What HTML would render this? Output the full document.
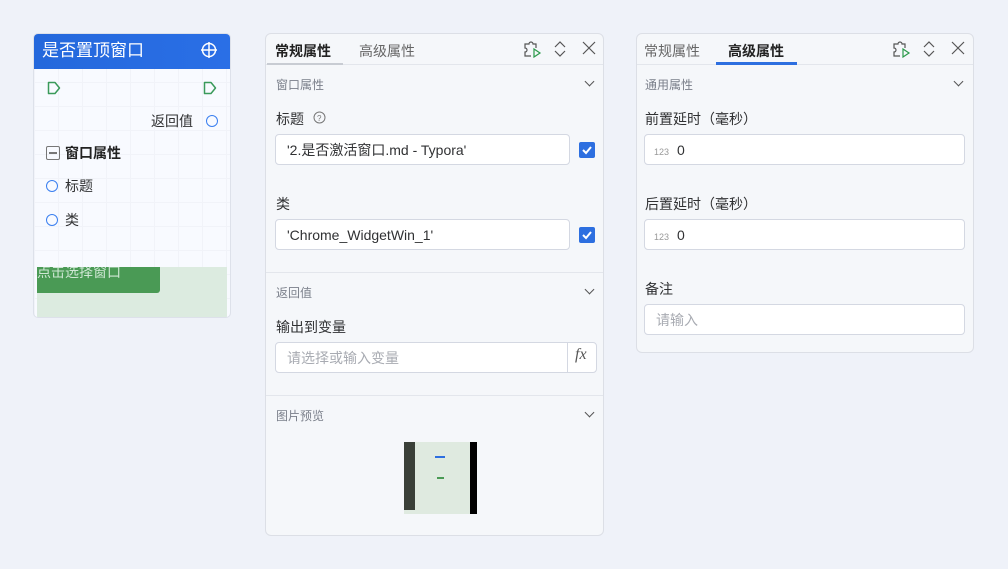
<!DOCTYPE html>
<html><head><meta charset="utf-8"><style>
*{box-sizing:border-box;margin:0;padding:0}
body{width:1008px;height:569px;background:#eff2f9;font-family:"Liberation Sans","Noto Sans CJK SC",sans-serif;position:relative;overflow:hidden;color:#303133}
.abs{position:absolute}
.node{left:33px;top:33px;width:198px;height:285px;border:1px solid #dde1ea;border-radius:5px;overflow:hidden;background:#f8faff;
background-image:linear-gradient(#f1f3f9 1px,transparent 1px),linear-gradient(90deg,#f1f3f9 1px,transparent 1px);background-size:24px 24px}
.nh{left:0;top:0;width:196px;height:35px;background:linear-gradient(90deg,#2468dc,#2a6fe6);color:#fff;font-size:17px;line-height:34px;padding-left:8px}
.panel{background:#f5f7fa;border:1px solid #dcdfe6;border-radius:6px}
.sec{font-size:12px;color:#7a7f8a}
.lbl{font-size:14px;color:#303133}
.inp{background:#fff;border:1px solid #d4d8e2;border-radius:4px;height:31px;font-size:14px;line-height:30px;padding-left:11px}
.chk{width:16px;height:16px;background:#2d6fe0;border-radius:2px}
.chev{width:7px;height:7px;border-right:1.8px solid #555;border-bottom:1.8px solid #555;transform:rotate(45deg)}
.hr{height:1px;background:#e3e6ec}
.circ{width:12px;height:12px;border:1.5px solid #3a7ff0;border-radius:50%}
</style></head><body>
<div class="abs node">
 <div class="abs nh">是否置顶窗口</div>
 <svg class="abs" style="left:166px;top:7px" width="18" height="18" viewBox="0 0 18 18" fill="none" stroke="#fff" stroke-width="1.5"><circle cx="9" cy="9" r="6.5"/><path d="M9 1v16M1 9h16"/></svg>
 <svg class="abs" style="left:12px;top:46px" width="16" height="16" viewBox="0 0 16 16" fill="none" stroke="#3a9a5a" stroke-width="1.5"><path d="M2.5 2.5h6.5l4.5 5.5-4.5 5.5H2.5z" stroke-linejoin="round"/></svg>
 <svg class="abs" style="left:168px;top:46px" width="16" height="16" viewBox="0 0 16 16" fill="none" stroke="#3a9a5a" stroke-width="1.5"><path d="M2.5 2.5h6.5l4.5 5.5-4.5 5.5H2.5z" stroke-linejoin="round"/></svg>
 <div class="abs lbl" style="left:117px;top:77px">返回值</div>
 <div class="abs circ" style="left:172px;top:81px"></div>
 <div class="abs" style="left:12px;top:112px;width:14px;height:14px;border:1.5px solid #777;border-radius:2px"><div style="margin:5px 2px 0;height:1.5px;background:#777"></div></div>
 <div class="abs lbl" style="left:31px;top:109px;font-weight:bold;color:#222">窗口属性</div>
 <div class="abs circ" style="left:12px;top:146px"></div>
 <div class="abs lbl" style="left:31px;top:142px">标题</div>
 <div class="abs circ" style="left:12px;top:180px"></div>
 <div class="abs lbl" style="left:31px;top:176px">类</div>
 <div class="abs" style="left:3px;top:233px;width:190px;height:52px;background:#dcebe0"></div>
 <div class="abs" style="left:3px;top:233px;width:123px;height:26px;background:#4a9a55;border-radius:0 0 3px 0;color:#cfe7d4;font-size:14px;line-height:10px;overflow:hidden">点击选择窗口</div>
</div>

<div class="abs panel" style="left:265px;top:33px;width:339px;height:503px">
 <div class="abs" style="left:9px;top:7px;font-size:14px;font-weight:bold;color:#222">常规属性</div>
 <div class="abs" style="left:93px;top:7px;font-size:14px;color:#666">高级属性</div>
 <div class="abs" style="left:0;top:30px;width:337px;height:1px;background:#e3e6ec"></div>
 <div class="abs" style="left:1px;top:29px;width:76px;height:2px;background:#c8ccd3"></div>
 <svg class="abs" style="left:256px;top:6px" width="20" height="18" viewBox="0 0 20 18" fill="none" stroke="#555" stroke-width="1.2"><path d="M9 16H3v-4a2 2 0 0 0 0-4V4h4a2 2 0 0 1 4 0h3v4"/><path d="M12 9l6 4-6 4z" stroke="#2a9a4a"/></svg>
 <svg class="abs" style="left:287px;top:6px" width="14" height="18" viewBox="0 0 14 18" fill="none" stroke="#555" stroke-width="1.2"><path d="M2 7l5-5 5 5M2 11l5 5 5-5"/></svg>
 <svg class="abs" style="left:316px;top:7px" width="14" height="14" viewBox="0 0 14 14" stroke="#555" stroke-width="1.2"><path d="M1 1l12 12M13 1L1 13"/></svg>
 <div class="abs sec" style="left:10px;top:42px">窗口属性</div><div class="abs chev" style="left:320px;top:44px"></div>
 <div class="abs lbl" style="left:10px;top:75px">标题</div>
 <svg class="abs" style="left:47px;top:77px" width="13" height="13" viewBox="0 0 13 13" fill="none" stroke="#777"><circle cx="6.5" cy="6.5" r="5.5"/><text x="4" y="10" font-size="8" fill="#777" stroke="none">?</text></svg>
 <div class="abs inp" style="left:9px;top:100px;width:295px">'2.是否激活窗口.md - Typora'</div>
 <div class="abs chk" style="left:313px;top:108px"><svg width="16" height="16"><path d="M4 8l3 3 5-6" stroke="#fff" stroke-width="2" fill="none"/></svg></div>
 <div class="abs lbl" style="left:10px;top:160px">类</div>
 <div class="abs inp" style="left:9px;top:185px;width:295px">'Chrome_WidgetWin_1'</div>
 <div class="abs chk" style="left:313px;top:193px"><svg width="16" height="16"><path d="M4 8l3 3 5-6" stroke="#fff" stroke-width="2" fill="none"/></svg></div>
 <div class="abs hr" style="left:0;top:238px;width:337px"></div>
 <div class="abs sec" style="left:10px;top:250px">返回值</div><div class="abs chev" style="left:320px;top:252px"></div>
 <div class="abs lbl" style="left:10px;top:283px">输出到变量</div>
 <div class="abs inp" style="left:9px;top:308px;width:322px;color:#a8abb2">请选择或输入变量</div>
 <div class="abs" style="left:301px;top:309px;width:1px;height:29px;background:#d4d8e2"></div>
 <div class="abs" style="left:309px;top:312px;font-size:16px;font-style:italic;color:#555;font-family:'Liberation Serif',serif">fx</div>
 <div class="abs hr" style="left:0;top:361px;width:337px"></div>
 <div class="abs sec" style="left:10px;top:373px">图片预览</div><div class="abs chev" style="left:320px;top:375px"></div>
 <div class="abs" style="left:138px;top:408px;width:73px;height:72px;background:#dfeae0">
  <div class="abs" style="left:0;top:0;width:11px;height:68px;background:#3a4038"></div>
  <div class="abs" style="left:66px;top:0;width:7px;height:72px;background:#000"></div>
  <div class="abs" style="left:31px;top:14px;width:10px;height:2px;background:#2d6fe0"></div>
  <div class="abs" style="left:33px;top:35px;width:7px;height:2px;background:#4a9a55"></div>
 </div>
</div>

<div class="abs panel" style="left:636px;top:33px;width:338px;height:320px">
 <div class="abs" style="left:7px;top:7px;font-size:14px;color:#666">常规属性</div>
 <div class="abs" style="left:91px;top:7px;font-size:14px;font-weight:bold;color:#222">高级属性</div>
 <div class="abs" style="left:0;top:30px;width:336px;height:1px;background:#e3e6ec"></div>
 <div class="abs" style="left:79px;top:28px;width:81px;height:3px;background:#2d6fe0"></div>
 <svg class="abs" style="left:254px;top:6px" width="20" height="18" viewBox="0 0 20 18" fill="none" stroke="#555" stroke-width="1.2"><path d="M9 16H3v-4a2 2 0 0 0 0-4V4h4a2 2 0 0 1 4 0h3v4"/><path d="M12 9l6 4-6 4z" stroke="#2a9a4a"/></svg>
 <svg class="abs" style="left:285px;top:6px" width="14" height="18" viewBox="0 0 14 18" fill="none" stroke="#555" stroke-width="1.2"><path d="M2 7l5-5 5 5M2 11l5 5 5-5"/></svg>
 <svg class="abs" style="left:314px;top:7px" width="14" height="14" viewBox="0 0 14 14" stroke="#555" stroke-width="1.2"><path d="M1 1l12 12M13 1L1 13"/></svg>
 <div class="abs sec" style="left:8px;top:42px">通用属性</div><div class="abs chev" style="left:318px;top:44px"></div>
 <div class="abs lbl" style="left:8px;top:75px">前置延时（毫秒）</div>
 <div class="abs inp" style="left:7px;top:100px;width:321px;padding-left:9px"><span style="font-size:9px;color:#999;margin-right:8px">123</span>0</div>
 <div class="abs lbl" style="left:8px;top:160px">后置延时（毫秒）</div>
 <div class="abs inp" style="left:7px;top:185px;width:321px;padding-left:9px"><span style="font-size:9px;color:#999;margin-right:8px">123</span>0</div>
 <div class="abs lbl" style="left:8px;top:245px">备注</div>
 <div class="abs inp" style="left:7px;top:270px;width:321px;color:#a8abb2">请输入</div>
</div>
</body></html>
